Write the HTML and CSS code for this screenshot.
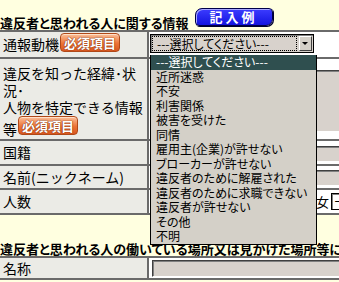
FILE: index.html
```html
<!DOCTYPE html>
<html lang="ja">
<head>
  <meta charset="UTF-8">
  <title>違反者情報</title>
  <link rel="stylesheet" href="styles.css">
</head>
<body>
  <div class="page">
    <!-- 違反者情報 -->
    <div class="sec-title">
      <h2>違反者と思われる人に関する情報</h2>
      <span class="btn-example">記入例</span>
    </div>
    <div class="form">
      <div class="label r1">通報動機<span class="req">必須項目</span></div>
      <div class="field r1">
        <div class="select">
          <span class="focus">---選択してください---</span>
          <span class="arrow"></span>
        </div>
      </div>

      <div class="label r2">違反を知った経緯･状況･<br>人物を特定できる情報等<span class="req">必須項目</span></div>
      <div class="field r2"><div class="textarea"></div></div>

      <div class="label r3">国籍</div>
      <div class="field r3"><div class="input"></div></div>

      <div class="label r4">名前(ニックネーム)</div>
      <div class="field r4"><div class="input"></div></div>

      <div class="label r5">人数</div>
      <div class="field r5">
        <span class="sex">男</span><span class="mini-select"></span>
        <span class="sex">女</span><span class="mini-select">ー</span>
      </div>
    </div>

    <!-- 働いている場所 -->
    <div class="sec-title second">
      <h2>違反者と思われる人の働いている場所又は見かけた場所等に関する情報</h2>
    </div>
    <div class="form">
      <div class="label r6">名称</div>
      <div class="field r6"><div class="input wide"></div></div>
    </div>

    <!-- 開いているプルダウン -->
    <ul class="dropdown">
      <li class="selected">---選択してください---</li>
      <li>近所迷惑</li>
      <li>不安</li>
      <li>利害関係</li>
      <li>被害を受けた</li>
      <li>同情</li>
      <li>雇用主(企業)が許せない</li>
      <li>ブローカーが許せない</li>
      <li>違反者のために解雇された</li>
      <li>違反者のために求職できない</li>
      <li>違反者が許せない</li>
      <li>その他</li>
      <li>不明</li>
    </ul>
  </div>
</body>
</html>
```

FILE: styles.css
```css
body {
  margin: 0;
  background-color: #ffffe0;
  font-family: "Noto Sans CJK JP", sans-serif;
  color: #000;
  overflow: hidden;
}
.page {
  position: relative;
  width: 339px;
  height: 282px;
  overflow: hidden;
}
.sec-title {
  height: 30px;
  display: flex;
  align-items: flex-end;
  white-space: nowrap;
}
.sec-title h2 {
  margin: 0;
  font-size: 13px;
  font-weight: bold;
  line-height: 15px;
  font-feature-settings: "palt";
}
.sec-title.second {
  height: 41px;
}
.btn-example {
  display: inline-block;
  width: 76px;
  height: 16px;
  margin: 0 0 4px 6px;
  background: linear-gradient(#3c3cff, #1414e0);
  border: 1px solid #000048;
  border-radius: 7px 4px 7px 4px;
  box-shadow: inset 1px 1px 0 #a8a8ff, 1px 1px 0 #000030;
  color: #fff;
  font-size: 13px;
  font-weight: bold;
  line-height: 16px;
  text-align: center;
  letter-spacing: 3px;
}
.form {
  display: grid;
  grid-template-columns: 147px 250px;
  column-gap: 2px;
  row-gap: 2px;
  background-color: #6a6a6a;
  border-top: 2px solid #6a6a6a;
  border-bottom: 2px solid #6a6a6a;
  width: 400px;
}
.label {
  background-color: #ebebe6;
  font-size: 14px;
  line-height: 17px;
  padding-left: 3px;
  display: flex;
  align-items: center;
  flex-wrap: wrap;
}
.label.r2 {
  display: block;
  padding-top: 6px;
}
.field {
  background-color: #fff;
}
.r1 { height: 25px; }
.r2 { height: 80px; }
.r3 { height: 23px; }
.r4 { height: 22px; }
.r5 { height: 23px; }
.r6 { height: 20px; }
.label.r2 { height: 74px; }
.req {
  display: inline-block;
  overflow: hidden;
  height: 17px;
  padding: 0 3px;
  margin-left: 1px;
  background: linear-gradient(#fcc09a, #ec7436 55%, #d85820);
  border: 1px solid #b04818;
  border-radius: 4px;
  box-shadow: inset 0 1px 0 #ffe0c8;
  color: #fff;
  font-size: 13px;
  font-weight: bold;
  line-height: 17px;
  text-shadow: 0 0 1px #7a2808, 0 0 1px #7a2808;
}
.label.r1 .req {
  margin-bottom: 4px;
}
.select {
  display: flex;
  align-items: center;
  width: 160px;
  height: 15px;
  margin: 2px 0 0 1px;
  padding: 1px;
  background-color: #d8d2cc;
  border: 1px solid #000;
  box-shadow: inset 1px 1px 0 #808080;
}
.select .focus {
  flex: 1;
  height: 13px;
  padding-left: 4px;
  border: 1px dotted #000;
  font-size: 12px;
  line-height: 13px;
  font-feature-settings: "palt";
}
.select .arrow {
  position: relative;
  width: 13px;
  height: 15px;
  margin-left: 2px;
  background-color: #d4d0c8;
  border: 1px solid;
  border-color: #fff #404040 #404040 #fff;
  box-sizing: border-box;
}
.select .arrow::after {
  content: "";
  position: absolute;
  left: 2px;
  top: 5px;
  border-left: 3px solid transparent;
  border-right: 3px solid transparent;
  border-top: 3px solid #000;
}
.input, .textarea {
  margin-left: 3px;
  background-color: #d8d2cc;
  border: 1px solid;
  border-color: #404040 #fff #fff #404040;
  box-shadow: inset 1px 1px 0 #808080;
}
.textarea {
  width: 230px;
  height: 60px;
  margin-top: 11px;
}
.r3 .input { height: 14px; margin-top: 5px; width: 230px; }
.r4 .input { height: 14px; margin-top: 4px; width: 230px; }
.input.wide { height: 15px; margin-top: 2px; width: 240px; }
.field.r5 {
  display: flex;
  align-items: center;
  gap: 2px;
  padding-left: 122px;
  font-size: 13px;
}
.mini-select {
  display: inline-block;
  width: 24px;
  height: 15px;
  border: 1px solid #000;
  box-shadow: inset 1px 1px 0 #808080;
  font-size: 11px;
  line-height: 15px;
  padding-left: 2px;
}
.dropdown {
  position: absolute;
  left: 150px;
  top: 55px;
  width: 165px;
  margin: 0;
  padding: 0;
  list-style: none;
  background-color: #d4d0c8;
  border: 1px solid #000;
  border-top: none;
  font-size: 12px;
  line-height: 14.5px;
  font-feature-settings: "palt";
}
.dropdown li {
  height: 14.5px;
  padding-left: 5px;
  white-space: nowrap;
}
.dropdown li.selected {
  background-color: #2f4f4f;
  color: #fff;
}
```
